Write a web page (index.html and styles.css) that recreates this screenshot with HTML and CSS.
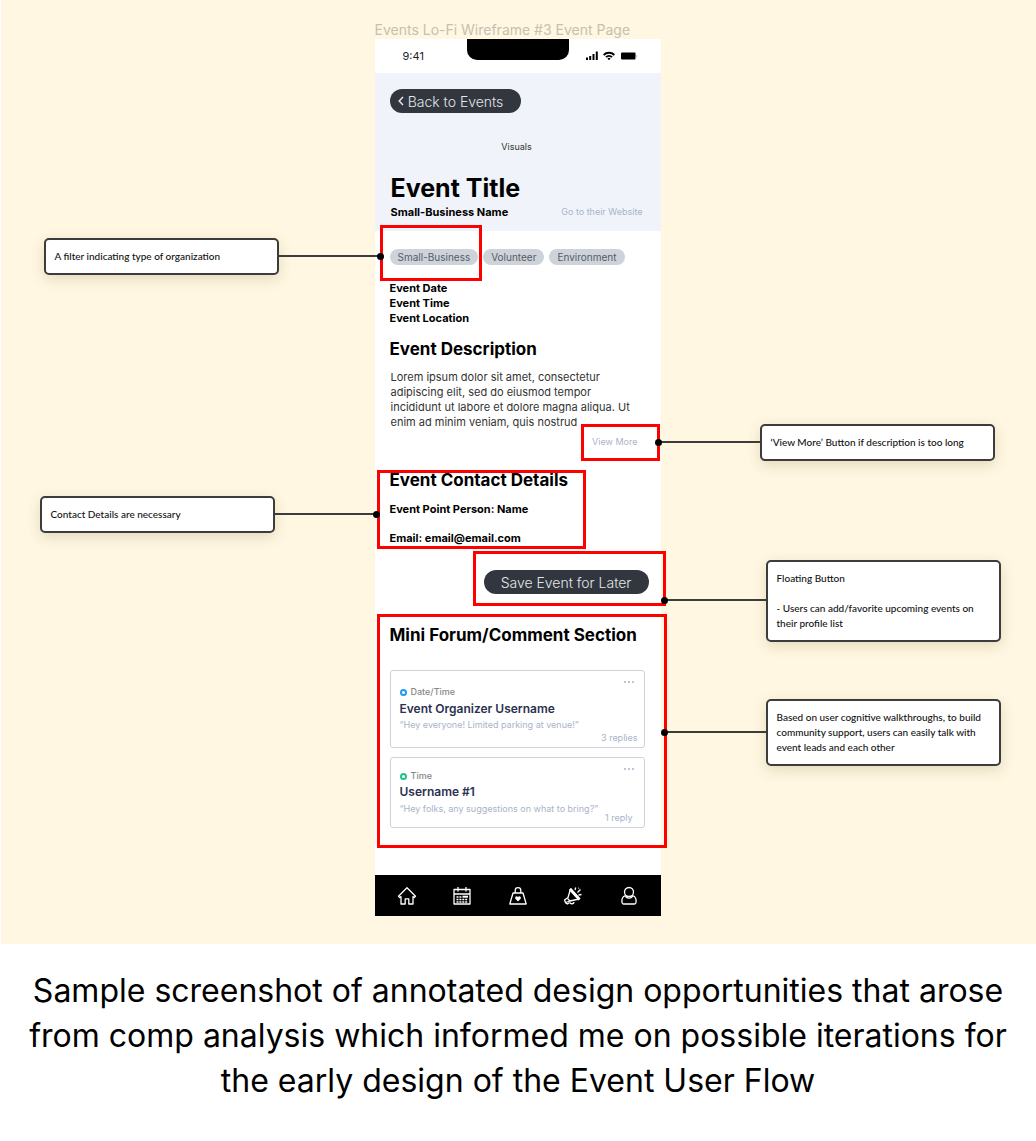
FILE: index.html
```html
<!DOCTYPE html>
<html lang="en">
<head>
<meta charset="utf-8">
<meta name="viewport" content="width=device-width, initial-scale=1">
<title>Event Page Wireframe</title>
<link rel="stylesheet" href="styles.css">
</head>
<body>
<figure class="sample">
  <div class="board">
    <div class="frame">
      <p class="frame-name">Events Lo-Fi Wireframe #3 Event Page</p>
      <main class="phone">
        <div class="status">
          <span class="clock">9:41</span>
          <span class="notch"></span>
          <svg class="signals" width="54" height="12" viewBox="0 0 54 12" aria-hidden="true">
            <path d="M1 7.5h2V10H1zM4.200 6h2v4h-2zM7.500 4h2v6h-2zM10.800 1.500h2V10h-2z"/>
            <path d="M18 4.300a8.500 8.500 0 0 1 12 0l-1.300 1.400a6.600 6.600 0 0 0-9.400 0zM20.300 6.500a5.300 5.300 0 0 1 7.400 0l-1.300 1.300a3.500 3.500 0 0 0-4.800 0zM22.400 8.500a2.400 2.400 0 0 1 3.200 0L24 10.200z"/>
            <rect x="36" y="2.500" width="14.500" height="7" rx="1"/>
            <path d="M51.500 4.500q1.500 1.500 0 3z" opacity=".5"/>
          </svg>
        </div>
        <header class="hero">
          <button class="pill back" type="button">
            <svg width="6" height="10" viewBox="0 0 6 10" aria-hidden="true"><path d="M5 1 1.200 5 5 9" fill="none" stroke="currentColor" stroke-width="1.500"/></svg>
            Back to Events
          </button>
          <p class="visuals">Visuals</p>
          <h1>Event Title</h1>
          <div class="byline">
            <strong>Small-Business Name</strong>
            <a class="quiet" href="#">Go to their Website</a>
          </div>
        </header>
        <div class="content">
          <ul class="tags">
            <li>Small-Business</li>
            <li>Volunteer</li>
            <li>Environment</li>
          </ul>
          <div class="facts">
            <p>Event Date</p>
            <p>Event Time</p>
            <p>Event Location</p>
          </div>
          <h2>Event Description</h2>
          <p class="description">Lorem ipsum dolor sit amet, consectetur<br>adipiscing elit, sed do eiusmod tempor<br>incididunt ut labore et dolore magna aliqua. Ut<br>enim ad minim veniam, quis nostrud</p>
          <a class="quiet more" href="#">View More</a>
          <h2 class="contact-title">Event Contact Details</h2>
          <div class="contact">
            <p>Event Point Person: Name</p>
            <p>Email: email@email.com</p>
          </div>
          <button class="pill save" type="button">Save Event for Later</button>
          <h2 class="forum-title">Mini Forum/Comment Section</h2>
          <div class="comments">
            <article class="comment">
              <div class="comment-head">
                <span class="when blue">Date/Time</span>
                <button class="dots" type="button" aria-label="More options"><i></i><i></i><i></i></button>
              </div>
              <h3>Event Organizer Username</h3>
              <p class="quote">“Hey everyone! Limited parking at venue!”</p>
              <p class="replies">3 replies</p>
            </article>
            <article class="comment compact">
              <div class="comment-head">
                <span class="when green">Time</span>
                <button class="dots" type="button" aria-label="More options"><i></i><i></i><i></i></button>
              </div>
              <h3>Username #1</h3>
              <p class="quote">“Hey folks, any suggestions on what to bring?”</p>
              <p class="replies">1 reply</p>
            </article>
          </div>
        </div>
        <nav class="tabs" aria-label="Main">
          <a href="#" aria-label="Home"><svg width="20" height="20" viewBox="0 0 20 20"><path d="M1.500 10.300 10 1.800l8.500 8.500-1.300 1.200-1.200-.9V18h-4.200v-5.200H8.200V18H4v-7.400l-1.200.9z"/></svg></a>
          <a href="#" aria-label="Calendar"><svg width="20" height="20" viewBox="0 0 20 20"><path d="M2 3.500h16V18H2zM2 8h16M6 1v4.500M14 1v4.500"/><path d="M4.500 11h5M4.500 13.500h11M4.500 16h11" stroke-dasharray="2 .9"/><path d="M10.500 10.700h5.500" stroke-width="2"/></svg></a>
          <a href="#" aria-label="Donate"><svg width="20" height="20" viewBox="0 0 20 20"><path d="M5 7h10l3.200 11H1.800zM7.200 7V4.500a2.800 2.800 0 0 1 5.600 0V7"/><path class="solid" d="M10 15.500 7.300 12.700a1.500 1.500 0 0 1 2.700-1.500 1.500 1.500 0 0 1 2.700 1.500z"/></svg></a>
          <a href="#" aria-label="Announcements"><svg width="20" height="20" viewBox="0 0 20 20"><path d="m7.500 3 8.500 10-9 2-4.500 1.500L1.500 14 5 11.500z"/><path d="m7 3 9.500 10.500" stroke-width="3"/><path d="M4.500 12.500 7 15M7 16.500c.5 2 4 1.500 4-.5M2 16.500l2.500 1.500 2-1.500M12 4l.7-2.500M14.500 6.500l3-3M15.500 9l3-.500M15.500 2.500l.3-.800"/></svg></a>
          <a href="#" aria-label="Profile"><svg width="20" height="20" viewBox="0 0 20 20"><circle cx="10" cy="6" r="4.500"/><path d="M6.500 9.500C3.500 10.500 2.500 13 3 16.500q.2 1.500 1.500 1.500h11q1.300 0 1.500-1.500c.5-3.500-.5-6-3.500-7M6.500 9.500C7 13 13 13 13.500 9.500"/></svg></a>
        </nav>
      </main>

      <div class="mark mark-tag"></div>
      <div class="mark mark-more"></div>
      <div class="mark mark-contact"></div>
      <div class="mark mark-save"></div>
      <div class="mark mark-forum"></div>

      <aside class="note left note-tag"><p>A filter indicating type of organization</p></aside>
      <aside class="note left note-contact"><p>Contact Details are necessary</p></aside>
      <aside class="note right note-more"><p>‘View More’ Button if description is too long</p></aside>
      <aside class="note right note-save"><p>Floating Button</p><p class="gap">- Users can add/favorite upcoming events on<br>their profile list</p></aside>
      <aside class="note right note-forum"><p>Based on user cognitive walkthroughs, to build<br>community support, users can easily talk with<br>event leads and each other</p></aside>
    </div>
  </div>
  <figcaption>Sample screenshot of annotated design opportunities that arose from comp analysis which informed me on possible iterations for the early design of the Event User Flow</figcaption>
</figure>
</body>
</html>
```
FILE: styles.css
```css
*,
*::before,
*::after { box-sizing: border-box; }

body,
figure,
h1, h2, h3,
p, ul {
  margin: 0;
  padding: 0;
}

body {
  background: #fff;
  color: #000;
  font-family: Inter, "Liberation Sans", sans-serif;
}

button {
  border: 0;
  padding: 0;
  background: none;
  font-family: inherit;
  cursor: pointer;
}

a { color: inherit; text-decoration: none; }

/* Board and frame */
.board {
  display: flex;
  justify-content: center;
  margin-left: 1px;
  padding: 20px 2px 28px 0;
  background: #fff7e1;
}

.frame {
  position: relative;
  width: 286px;
}

.frame-name {
  color: #c6c0b0;
  font-size: 14px;
  line-height: 19px;
  white-space: nowrap;
}

.phone { background: #fff; }

.status {
  display: grid;
  grid-template-columns: 1fr 102px 1fr;
  height: 34px;
}

.clock {
  align-self: center;
  padding-left: 28px;
  color: #222;
  font-size: 11px;
  line-height: 14px;
}

.notch {
  height: 21px;
  border-radius: 0 0 10px 10px;
  background: #000;
}

.signals {
  align-self: center;
  justify-self: end;
  margin-right: 22px;
}

/* Hero */
.hero {
  padding: 16px 18px 11px 16px;
  background: #f0f3f9;
}

.pill {
  display: flex;
  align-items: center;
  justify-content: center;
  height: 24px;
  border-radius: 12px;
  background: #32373f;
  color: #e4e6e9;
  font-size: 14px;
  font-weight: 300;
}

.back {
  gap: 4px;
  width: 131px;
  margin-left: -1px;
  padding-right: 9px;
}

.visuals {
  margin-top: 24px;
  color: #333;
  font-size: 9px;
  line-height: 20px;
  text-align: center;
}

h1 {
  margin-top: 16px;
  font-size: 25px;
  font-weight: 700;
  line-height: 30px;
}

.byline {
  display: flex;
  align-items: center;
  justify-content: space-between;
  margin-top: 1px;
  font-size: 11px;
  line-height: 16px;
}

.quiet {
  color: #a9b3c9;
  font-size: 9px;
}

/* Content */
.content {
  display: flex;
  flex-direction: column;
  padding: 18px 16px 47px 15px;
}

.tags {
  display: flex;
  gap: 5px;
  list-style: none;
}

.tags li {
  padding: 0 8px;
  border-radius: 8px;
  background: #ced3da;
  color: #555b66;
  font-size: 10px;
  line-height: 16px;
}

.facts,
.contact {
  margin-top: 16px;
  font-size: 11px;
  font-weight: 700;
  line-height: 15px;
}

h2 {
  margin-top: 13px;
  font-size: 17px;
  font-weight: 700;
  line-height: 20px;
  white-space: nowrap;
}

.description {
  margin-top: 11px;
  padding-left: 1px;
  color: #333;
  font-size: 11px;
  line-height: 15px;
  white-space: nowrap;
}

.more {
  align-self: flex-end;
  margin: 6px 7px 0 0;
  line-height: 12px;
}

.contact-title { margin-top: 22px; }

.contact {
  display: grid;
  gap: 14px;
  margin-top: 12px;
}

.save {
  align-self: flex-end;
  width: 165px;
  margin: 24px -4px 0 0;
}

.forum-title { margin-top: 31px; }

.comments {
  display: grid;
  gap: 9px;
  margin-top: 25px;
}

.comment {
  padding: 6px 6px 3px 9px;
  border: 1px solid #cdd3dd;
  border-radius: 3px;
  color: #a9b3c9;
  font-size: 9px;
  line-height: 12px;
}

.comment-head {
  display: flex;
  align-items: flex-start;
  justify-content: space-between;
}

.when {
  display: flex;
  align-items: center;
  gap: 4px;
  padding-top: 9px;
  color: #888;
  font-weight: 500;
}

.when::before {
  width: 7px;
  height: 7px;
  border: 2px solid;
  border-radius: 50%;
  content: "";
}

.blue::before { border-color: #1c9cf5; }
.green::before { border-color: #1fbf92; }

.dots {
  display: flex;
  gap: 2px;
  padding: 4px;
}

.dots i {
  width: 2px;
  height: 2px;
  border-radius: 50%;
  background: #a9b3c9;
}

.comment h3 {
  margin-top: 2px;
  color: #2b3150;
  font-size: 12px;
  font-weight: 600;
  line-height: 18px;
}

.quote { margin-top: 1px; }

.replies {
  margin-top: 1px;
  text-align: right;
}

.compact .when { padding-top: 6px; }
.compact h3 { margin-top: 1px; }
.compact .quote { margin-top: 2px; }

.compact .replies {
  margin-top: -3px;
  padding-right: 5px;
}

/* Tab bar */
.tabs {
  display: flex;
  align-items: center;
  justify-content: space-between;
  height: 41px;
  padding: 0 22px;
  background: #000;
}

.tabs a { display: flex; }

.tabs svg {
  fill: none;
  stroke: #fff;
  stroke-linejoin: round;
  stroke-width: 1.3;
}

.tabs .solid { fill: #fff; stroke: none; }

/* Highlight outlines laid over the phone */
.mark {
  position: absolute;
  border: 3px solid #fe0000;
}

.mark-tag { top: 205px; left: 5px; width: 102px; height: 56px; }
.mark-more { top: 404px; left: 206px; width: 79px; height: 37px; }
.mark-contact { top: 450px; left: 2px; width: 209px; height: 79px; }
.mark-save { top: 531px; left: 98px; width: 193px; height: 55px; }
.mark-forum { top: 594px; left: 2px; width: 290px; height: 234px; }

/* Annotations, each joined to the phone by a dotted-end line */
.note {
  position: absolute;
  width: 235px;
  padding: 9px;
  border: 2px solid #3c3c3c;
  border-radius: 5px;
  background: #fff;
  box-shadow: 0 4px 14px rgba(90, 70, 20, .16);
  color: #111;
  font-family: Lato, "Liberation Sans", sans-serif;
  font-size: 10px;
  font-weight: 500;
  line-height: 15px;
  white-space: nowrap;
}

.note::before,
.note::after {
  position: absolute;
  content: "";
}

.note::before {
  top: var(--line);
  width: var(--reach);
  height: 2px;
  background: #3c3c3c;
}

.note::after {
  top: calc(var(--line) - 2px);
  width: 7px;
  height: 7px;
  border-radius: 50%;
  background: #000;
}

.left::before { left: 100%; }
.left::after { left: calc(100% + var(--reach) - 3px); }
.right::before { right: 100%; }
.right::after { right: calc(100% + var(--reach) - 3px); }

.gap { margin-top: 15px; }

.note-tag { --line: 15px; --reach: 103px; top: 218px; left: -331px; }
.note-contact { --line: 15px; --reach: 103px; top: 476px; left: -335px; }
.note-more { --line: 15px; --reach: 103px; top: 404px; left: 385px; }
.note-save { --line: 37px; --reach: 103px; top: 540px; left: 391px; }
.note-forum { --line: 30px; --reach: 103px; top: 679px; left: 391px; }

/* Caption */
figcaption {
  padding: 24px 12px;
  font-size: 32px;
  line-height: 45px;
  text-align: center;
}
```
